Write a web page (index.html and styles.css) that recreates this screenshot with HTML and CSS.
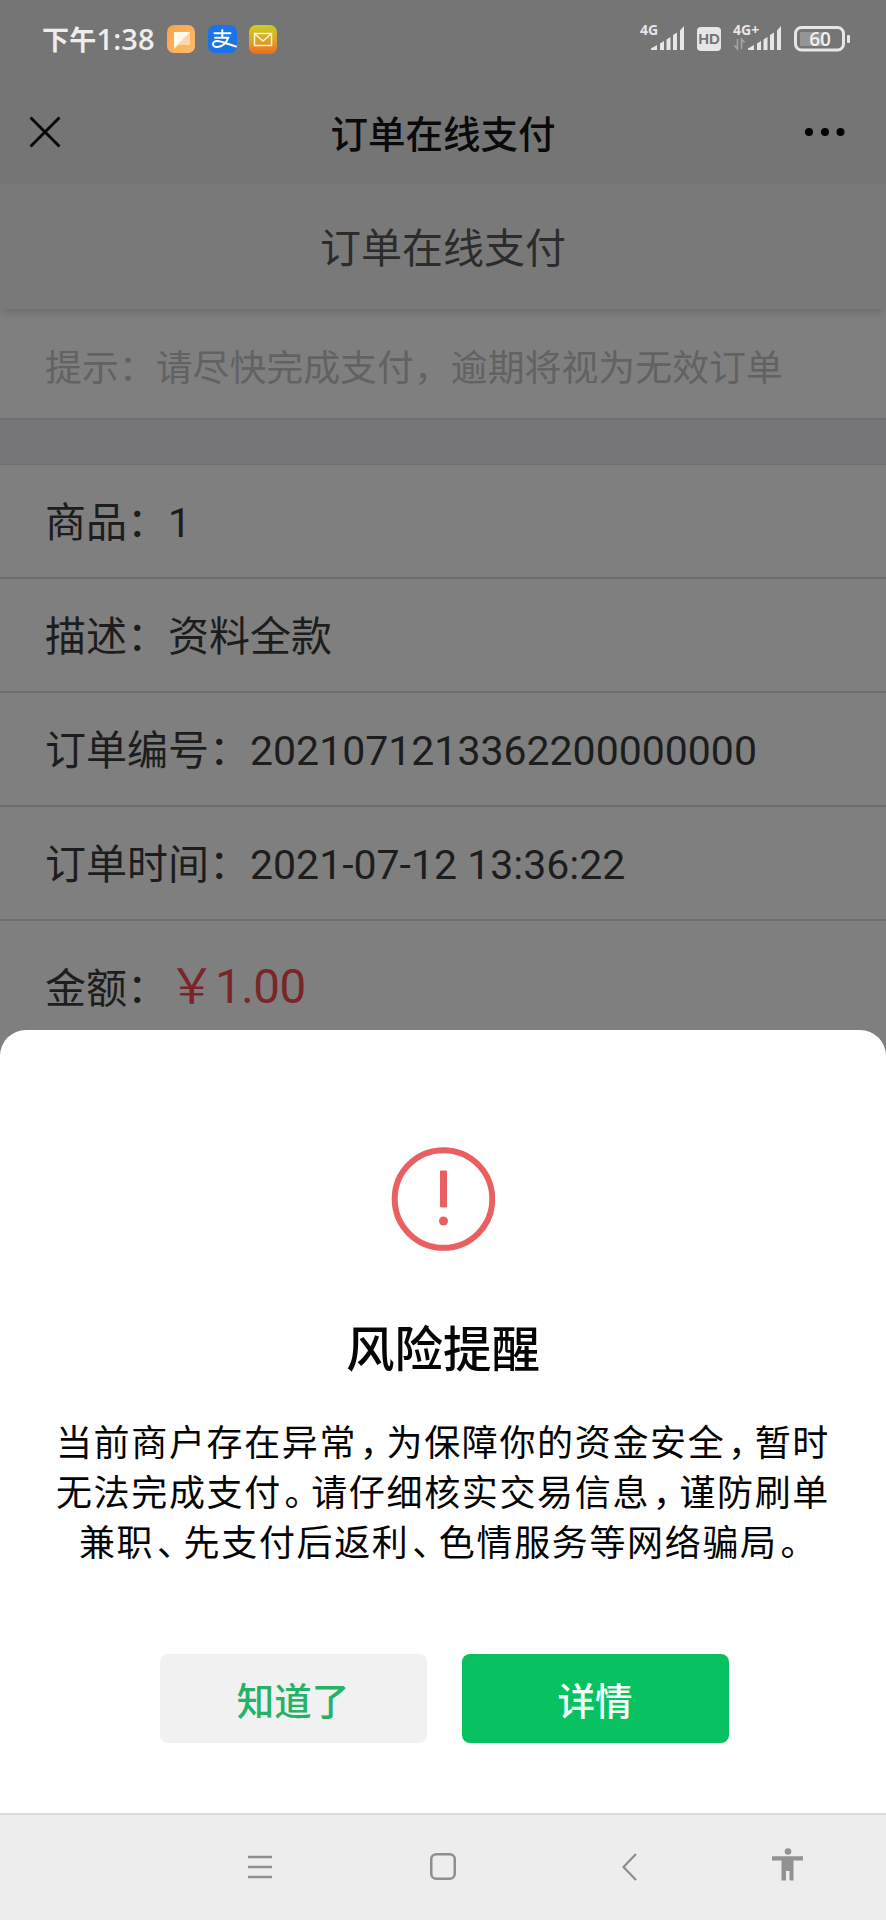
FILE: index.html
```html
<!DOCTYPE html>
<html lang="zh-CN">
<head>
<meta charset="utf-8">
<title>订单在线支付</title>
<link rel="stylesheet" href="styles.css">
</head>
<body>
<div class="screen">
  <header class="top">
    <div class="status">
      <span class="clock">下午<span class="clock-digits">1:38</span></span>
      <svg class="app app-note" width="28" height="28" viewBox="0 0 28 28">
        <defs><linearGradient id="note" x1="0" y1="0" x2="1" y2="1"><stop offset="0" stop-color="#f9a346"/><stop offset="1" stop-color="#fbbd6c"/></linearGradient></defs>
        <rect width="28" height="28" rx="7" fill="url(#note)"/>
        <path d="M7 7H23V20H12L7 24Z" fill="#fbd9a8"/>
        <path d="M7 7H23L7 23Z" fill="#fffaf0"/>
      </svg>
      <svg class="app app-pay" width="29" height="28" viewBox="0 0 29 28">
        <rect width="29" height="28" rx="7" fill="#1a73e8"/>
        <g fill="none" stroke="#fff" stroke-width="2" stroke-linecap="round">
          <path d="M6.5 8.3H22.5M14.3 5V12.6M7 12.7H20.3C18.5 17.5 15 22 9.300 22C3.600 22 3.600 16 9 16C15 16 20 19.800 28 21.500"/>
        </g>
      </svg>
      <svg class="app app-mail" width="28" height="29" viewBox="0 0 28 29">
        <defs><linearGradient id="mail" x1="0" y1="0" x2="0" y2="1"><stop offset="0" stop-color="#c9cf1c"/><stop offset=".5" stop-color="#d9a82a"/><stop offset="1" stop-color="#ee6c20"/></linearGradient></defs>
        <rect width="28" height="29" rx="7" fill="url(#mail)"/>
        <path d="M5.500 8.500H22.500V20.500H5.500ZM6 9L14 16L22 9" fill="none" stroke="#fff3cf" stroke-width="1.500"/>
      </svg>
      <span class="spacer"></span>
      <svg class="signal" width="46" height="30" viewBox="0 0 46 30">
        <text x="0" y="14" class="net">4G</text>
        <path d="M11 29V27.500L17 24V29ZM20 29V22.500L24 20V29ZM26.500 29V18.500L30.500 16V29ZM33 29V14L37 11.500V29ZM40 29V9.500L44 5V29Z" fill="#e6e6e6"/>
      </svg>
      <svg class="hd" width="24" height="24" viewBox="0 0 24 24">
        <rect width="24" height="24" rx="4" fill="#e6e6e6"/>
        <text x="12" y="17" class="hd-text">HD</text>
      </svg>
      <svg class="signal signal-plus" width="50" height="30" viewBox="0 0 50 30">
        <text x="0" y="14" class="net">4G+</text>
        <path d="M4.500 18V28L1.500 24.500M8.500 28V18L11.500 21.500" fill="none" stroke="#a8a8a8" stroke-width="1.500"/>
        <path d="M15 29V27.500L21 24V29ZM24 29V22.500L28 20V29ZM30.500 29V18.500L34.500 16V29ZM37 29V14L41 11.500V29ZM44 29V9.500L48 5V29Z" fill="#e6e6e6"/>
      </svg>
      <svg class="battery" width="57" height="26" viewBox="0 0 57 26">
        <rect x="1.500" y="1.500" width="48" height="22.500" rx="6" fill="none" stroke="#e6e6e6" stroke-width="3"/>
        <rect x="6" y="6" width="24" height="14" rx="1" fill="#959595"/>
        <rect x="53" y="9" width="3" height="8" rx="1" fill="#e6e6e6"/>
        <text x="26" y="19.600" class="level">60</text>
      </svg>
    </div>
    <div class="titlebar">
      <svg class="close" width="32" height="32" viewBox="0 0 32 32"><path d="M1.500 1.500L30.500 30.500M30.500 1.500L1.500 30.500" stroke="#080808" stroke-width="3"/></svg>
      <h1 class="title">订单在线支付</h1>
      <svg class="more" width="40" height="8" viewBox="0 0 40 8"><circle cx="4" cy="4" r="4"/><circle cx="20" cy="4" r="4"/><circle cx="35.500" cy="4" r="4"/></svg>
    </div>
  </header>

  <main class="page">
    <div class="subtitle">订单在线支付</div>
    <div class="tip">提示：请尽快完成支付，逾期将视为无效订单</div>
    <div class="gap"></div>
    <div class="row">商品：1</div>
    <div class="row">描述：资料全款</div>
    <div class="row">订单编号：2021071213362200000000</div>
    <div class="row">订单时间：2021-07-12 13:36:22</div>
    <div class="row row-amount">金额：<span class="amount">￥1.00</span></div>
  </main>

  <section class="sheet">
    <svg class="warn" width="104" height="104" viewBox="0 0 104 104">
      <circle cx="52.500" cy="52" r="48.800" fill="none" stroke="#e95f62" stroke-width="6"/>
      <rect x="49" y="23.500" width="7" height="37" rx="1" fill="#e95f62"/>
      <circle cx="52.500" cy="74" r="4.500" fill="#e95f62"/>
    </svg>
    <h2 class="sheet-title">风险提醒</h2>
    <p class="message">当前商户存在异常<span class="p">，</span>为保障你的资金安全<span class="p">，</span>暂时<br>无法完成支付<span class="p">。</span>请仔细核实交易信息<span class="p">，</span>谨防刷单<br>兼职<span class="p">、</span>先支付后返利<span class="p">、</span>色情服务等网络骗局<span class="p">。</span></p>
    <div class="actions">
      <button class="btn btn-plain">知道了</button>
      <button class="btn btn-primary">详情</button>
    </div>
  </section>

  <nav class="nav">
    <svg class="nav-menu" width="24" height="24" viewBox="0 0 24 24"><path d="M0 2H24M0 12H24M0 22H24" stroke="#8e8e8e" stroke-width="2.500"/></svg>
    <svg class="nav-home" width="26" height="27" viewBox="0 0 26 27"><rect x="1.250" y="1.250" width="23.500" height="24.500" rx="5" fill="none" stroke="#8e8e8e" stroke-width="2.500"/></svg>
    <svg class="nav-back" width="15" height="28" viewBox="0 0 15 28"><path d="M14 1L1.500 14L14 27" fill="none" stroke="#8e8e8e" stroke-width="2.300"/></svg>
    <svg class="nav-person" width="31" height="33" viewBox="0 0 31 33"><circle cx="16" cy="3.500" r="3.300" fill="#929292"/><path d="M0 8.300H31V12.500H21.500V32.500H17.500V23H14V32.500H9.500V12.500H0Z" fill="#929292"/></svg>
  </nav>
</div>
</body>
</html>
```
FILE: styles.css
```css
* { box-sizing: border-box; }
body {
  margin: 0;
  font-family: Roboto, "Noto Sans CJK SC", sans-serif;
  background: #7f7f7f;
}
svg { display: block; flex: none; }
.screen {
  display: flex;
  flex-direction: column;
  width: 886px;
  height: 1920px;
  overflow: hidden;
}

.top { height: 184px; background: #757575; }
.status {
  display: flex;
  height: 78px;
  padding: 0 35px 0 42px;
  align-items: center;
}
.clock {
  width: 125px;
  font: 700 27px/40px "Noto Sans CJK SC", sans-serif;
  letter-spacing: .2px;
  color: #eee;
  white-space: nowrap;
}
.clock-digits { font: 600 29px/40px "Open Sans", sans-serif; }
.app-pay { margin-left: 13px; }
.app-mail { margin-left: 12px; }
.spacer { flex: 1; }
.net { font: 700 14px "Open Sans", sans-serif; fill: #e6e6e6; }
.hd { margin-left: 11px; }
.hd-text { font: 700 15px "Liberation Sans", sans-serif; fill: #757575; text-anchor: middle; }
.signal { margin-top: -6px; }
.signal-plus { margin-left: 12px; }
.battery { margin-left: 11px; }
.level { font: 600 19px "Open Sans", sans-serif; fill: #f0f0f0; text-anchor: middle; }
.titlebar {
  display: grid;
  grid-template-columns: 1fr auto 1fr;
  height: 106px;
  padding: 1px 41px 0 29px;
  align-items: center;
}
.title {
  margin: 0 0 0 12px;
  font: 500 37.500px/104px "Noto Sans CJK SC", sans-serif;
  color: #0a0a0a;
}
.more { justify-self: end; }

.page { flex: none; color: #1d1d1d; }
.subtitle {
  position: relative;
  height: 125px;
  background: #797979;
  box-shadow: 0 5px 10px -3px rgba(0, 0, 0, .2);
  font: 41px/123px "Noto Sans CJK SC", sans-serif;
  text-align: center;
  color: #2c2c2c;
}
.tip {
  height: 109px;
  padding-left: 45px;
  font: 36.900px/112px "Noto Sans CJK SC", sans-serif;
  color: #626262;
}
.gap {
  height: 47px;
  background: #767678;
  border-top: 2px solid #6e6e6e;
  border-bottom: 1px solid #6e6e6e;
}
.row {
  height: 114px;
  padding-left: 45px;
  border-bottom: 2px solid #6c6c6c;
  font-size: 41px;
  line-height: 117px;
  white-space: nowrap;
}
.row-amount { height: 109px; line-height: 132px; border: 0; }
.amount { font-size: 47.500px; letter-spacing: -.500px; color: #7a2526; }

.sheet {
  display: flex;
  flex-direction: column;
  align-items: center;
  height: 783px;
  padding-top: 117px;
  border-radius: 26px 26px 0 0;
  background: #fff;
  font-family: "Noto Sans CJK SC", sans-serif;
  color: #050505;
}
.sheet-title { margin: 60px 0 0; font-size: 48.500px; line-height: 70px; font-weight: 500; }
.message {
  margin: 34px 0 0;
  font-size: 36px;
  line-height: 50px;
  letter-spacing: 1.650px;
  text-align: center;
  white-space: nowrap;
}
.p { margin: 0 7px 0 2.700px; font-feature-settings: "halt"; }
.actions { display: flex; gap: 35px; margin-top: 89px; padding-left: 2px; }
.btn {
  width: 267px;
  height: 89px;
  padding: 0;
  border: 0;
  border-radius: 8px;
  font: 500 37.500px/89px "Noto Sans CJK SC", sans-serif;
}
.btn-plain { background: #f1f1f1; color: #26b266; }
.btn-primary { background: #08c261; color: #f2fff7; }

.nav {
  display: flex;
  align-items: center;
  height: 107px;
  padding: 0 0 2px 248px;
  background: #ededed;
  border-top: 2px solid #dcdcdc;
}
.nav-home { margin-left: 158px; }
.nav-back { margin-left: 166px; }
.nav-person { margin-left: 135px; margin-top: -4px; }
```
